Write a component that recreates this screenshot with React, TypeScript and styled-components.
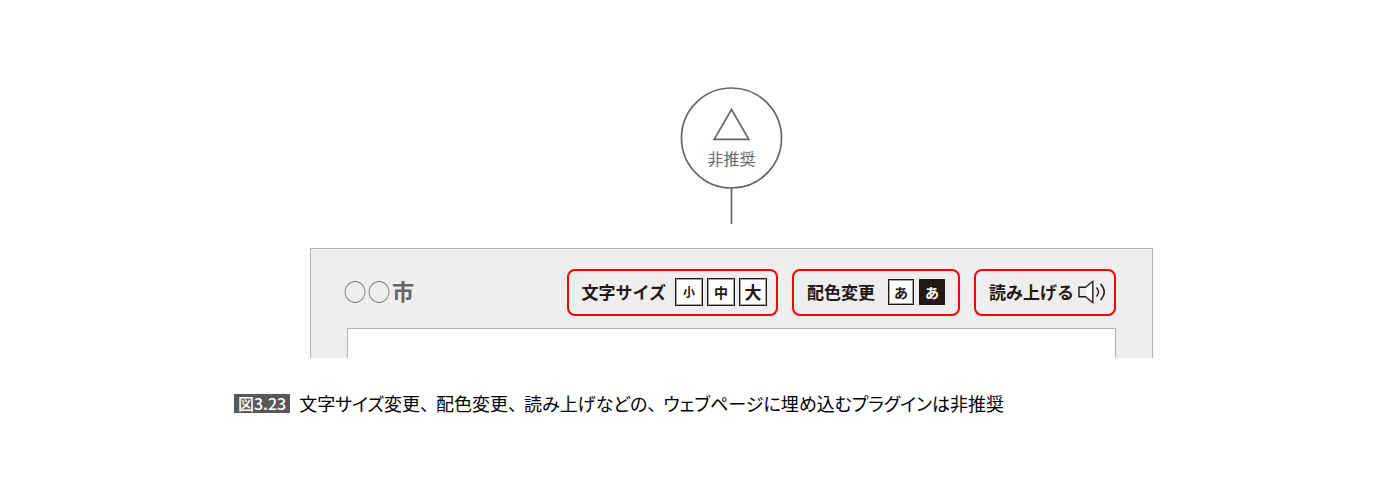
import React from "react";
import styled, { createGlobalStyle } from "styled-components";

const GlobalStyle = createGlobalStyle`
  * { box-sizing: border-box; }
  body {
    margin: 0;
    background: #fff;
    font-family: "Noto Sans CJK JP", sans-serif;
  }
`;

const Figure = styled.figure`
  margin: 0;
  padding: 87px 234px 80px;
`;

const Diagram = styled.div`
  display: flex;
  flex-direction: column;
  margin: 0 13px 0 76px;
`;

const Marker = styled.svg`
  display: block;
  align-self: center;
  margin-bottom: 23px;
  font-size: 16px;
`;

const Screen = styled.div`
  border: 1px solid #b3b3b3;
  border-bottom: 0;
  background: #eee;
`;

const Header = styled.header`
  display: flex;
  align-items: center;
  justify-content: space-between;
  padding: 20px 36px 12px 33px;
`;

const SiteName = styled.div`
  padding-bottom: 6px;
  color: #666;
  font-size: 22px;
  line-height: 32px;
  font-weight: 700;
`;

const Rings = styled.span`
  font-weight: 400;
  letter-spacing: 2px;
  font-feature-settings: "palt";
`;

const Tools = styled.div`
  display: flex;
  gap: 14px;
`;

const Tool = styled.div<{ $end: number; $gap: number }>`
  display: flex;
  align-items: center;
  gap: ${(p) => p.$gap}px;
  height: 47px;
  padding: 0 ${(p) => p.$end}px 1px 13px;
  border: 2px solid #f00;
  border-radius: 8px;
`;

const ToolLabel = styled.span`
  color: #231815;
  font-size: 17px;
  line-height: 24px;
  font-weight: 700;
  white-space: nowrap;
`;

const Choices = styled.div<{ $gap: number }>`
  display: flex;
  gap: ${(p) => p.$gap}px;
`;

const Choice = styled.button<{ $size: number; $text: number; $dark?: boolean }>`
  display: flex;
  align-items: center;
  justify-content: center;
  width: ${(p) => p.$size}px;
  height: ${(p) => p.$size}px;
  padding: 0;
  border: 1px solid #231815;
  background: ${(p) => (p.$dark ? "#231815" : "#fff")};
  box-shadow: ${(p) => (p.$dark ? "none" : "inset 0 0 0 1px #a7a2a1")};
  color: ${(p) => (p.$dark ? "#fff" : "#231815")};
  font-family: inherit;
  font-size: ${(p) => p.$text}px;
  line-height: 20px;
  font-weight: 700;
`;

const SpeakButton = styled.button`
  display: flex;
  padding: 0;
  border: 0;
  background: none;
`;

const Content = styled.div`
  height: 30px;
  margin: 0 36px;
  border: 1px solid #b3b3b3;
  border-bottom: 0;
  background: #fff;
`;

const Caption = styled.figcaption`
  display: flex;
  align-items: center;
  gap: 9px;
  margin-top: 32px;
  color: #000;
  font-size: 18px;
  line-height: 26px;
  font-feature-settings: "palt";
`;

const FigureNumber = styled.span`
  flex: none;
  padding: 0 4px;
  background: #595757;
  color: #fff;
  font-size: 16px;
  line-height: 19px;
  font-weight: 500;
`;

const CaptionText = styled.span`
  display: flex;
  flex-wrap: wrap;
  column-gap: 7px;
  padding-bottom: 1px;
`;

const phrases = [
  "文字サイズ変更、",
  "配色変更、",
  "読み上げなどの、",
  "ウェブページに埋め込むプラグインは非推奨",
];

export default function App() {
  return (
    <>
      <GlobalStyle />
      <Figure>
        <Diagram>
          <Marker width="103" height="138" viewBox="0 0 103 138">
            <g fill="none" stroke="#666" strokeWidth="1.7">
              <circle cx="51.5" cy="51" r="50" />
              <path d="M51.5 22.5 68.8 52.3H34.2Z" />
              <path d="M51.5 101V137" />
            </g>
            <text x="51.5" y="78" textAnchor="middle" fill="#666">非推奨</text>
          </Marker>
          <Screen>
            <Header>
              <SiteName>
                <Rings>◯◯</Rings>市
              </SiteName>
              <Tools>
                <Tool $end={9} $gap={9}>
                  <ToolLabel id="size-label">文字サイズ</ToolLabel>
                  <Choices $gap={4} role="group" aria-labelledby="size-label">
                    <Choice type="button" $size={28} $text={12}>小</Choice>
                    <Choice type="button" $size={28} $text={14}>中</Choice>
                    <Choice type="button" $size={28} $text={17}>大</Choice>
                  </Choices>
                </Tool>
                <Tool $end={13} $gap={13}>
                  <ToolLabel id="color-label">配色変更</ToolLabel>
                  <Choices $gap={5} role="group" aria-labelledby="color-label">
                    <Choice type="button" $size={26} $text={14}>あ</Choice>
                    <Choice type="button" $size={26} $text={14} $dark>あ</Choice>
                  </Choices>
                </Tool>
                <Tool $end={8} $gap={4}>
                  <ToolLabel id="speak-label">読み上げる</ToolLabel>
                  <SpeakButton type="button" aria-labelledby="speak-label">
                    <svg width="28" height="24" viewBox="0 0 28 24" fill="none" stroke="#231815" strokeWidth="1.4">
                      <path d="M1 7.2H7.5L14.8 1.5V22.5L7.5 16.8H1Z" fill="#eee" />
                      <path d="M8.5 7.5 14 3.2V20.8L8.5 16.5Z" fill="#fff" stroke="none" />
                      <path d="M18.5 7.5Q22.5 12 18.5 16.5M22.5 4Q30 12 22.5 20" />
                    </svg>
                  </SpeakButton>
                </Tool>
              </Tools>
            </Header>
            <Content />
          </Screen>
        </Diagram>
        <Caption>
          <FigureNumber>図3.23</FigureNumber>
          <CaptionText>
            {phrases.map((phrase) => (
              <span key={phrase}>{phrase}</span>
            ))}
          </CaptionText>
        </Caption>
      </Figure>
    </>
  );
}
